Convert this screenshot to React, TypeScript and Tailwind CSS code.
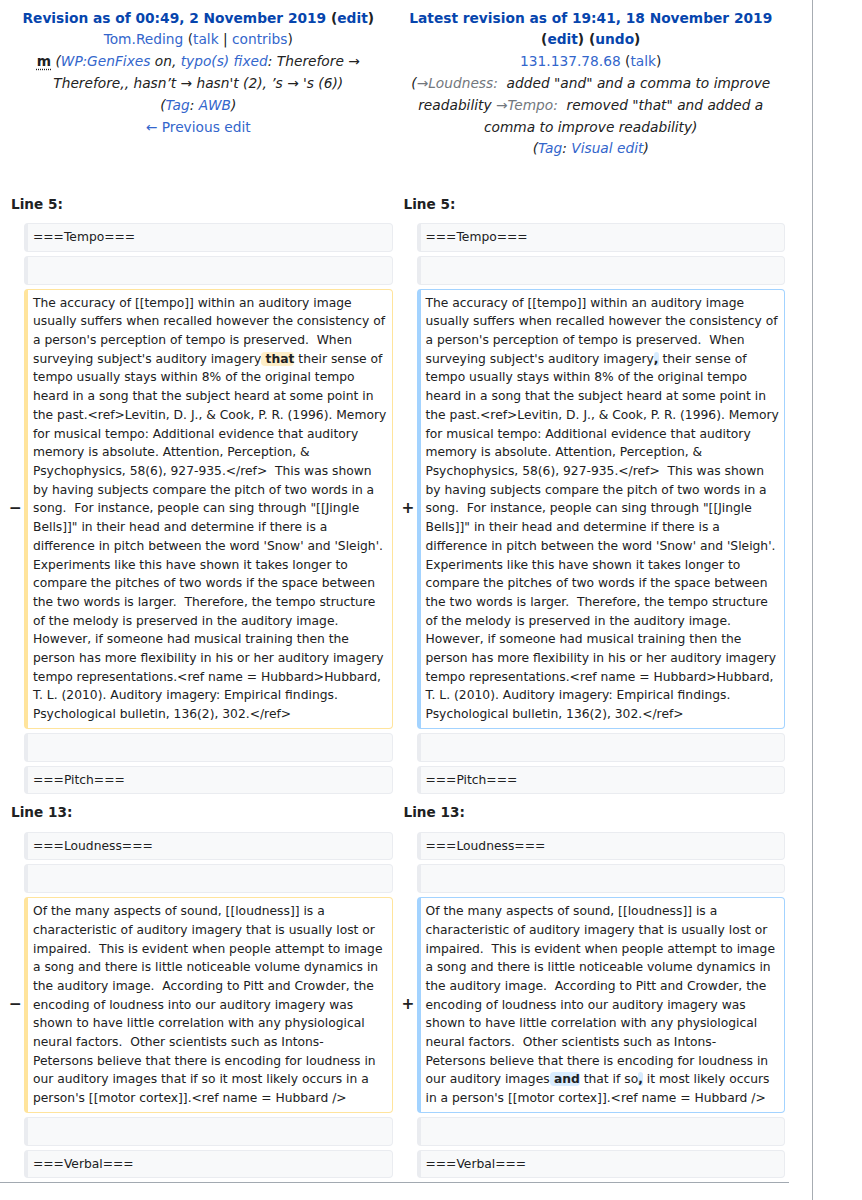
import type { ReactNode } from "react";

const tempoHead =
  "The accuracy of [[tempo]] within an auditory image usually suffers when recalled however the consistency of a person's perception of tempo is preserved.  When surveying subject's auditory imagery";
const tempoTail =
  " their sense of tempo usually stays within 8% of the original tempo heard in a song that the subject heard at some point in the past.<ref>Levitin, D. J., & Cook, P. R. (1996). Memory for musical tempo: Additional evidence that auditory memory is absolute. Attention, Perception, & Psychophysics, 58(6), 927-935.</ref>  This was shown by having subjects compare the pitch of two words in a song.  For instance, people can sing through \"[[Jingle Bells]]\" in their head and determine if there is a difference in pitch between the word 'Snow' and 'Sleigh'. Experiments like this have shown it takes longer to compare the pitches of two words if the space between the two words is larger.  Therefore, the tempo structure of the melody is preserved in the auditory image. However, if someone had musical training then the person has more flexibility in his or her auditory imagery tempo representations.<ref name = Hubbard>Hubbard, T. L. (2010). Auditory imagery: Empirical findings. Psychological bulletin, 136(2), 302.</ref>";

// the reference wraps right after "Intons-", so the break is kept explicit
const loudHead =
  "Of the many aspects of sound, [[loudness]] is a characteristic of auditory imagery that is usually lost or impaired.  This is evident when people attempt to image a song and there is little noticeable volume dynamics in the auditory image.  According to Pitt and Crowder, the encoding of loudness into our auditory imagery was shown to have little correlation with any physiological neural factors.  Other scientists such as Intons-\nPetersons believe that there is encoding for loudness in our auditory images";
const loudTail = " it most likely occurs in a person's [[motor cortex]].<ref name = Hubbard />";

const box =
  "rounded-[4px] border border-l-4 px-[5px] py-[4px] text-[12.3px] leading-[18.7px] whitespace-pre-wrap break-words text-[#202122]";

function Link({ children, dark = false }: { children: ReactNode; dark?: boolean }) {
  return <a className={dark ? "text-[#0645ad]" : "text-[#3366cc]"}>{children}</a>;
}

function Del({ children }: { children: ReactNode }) {
  return <del className="rounded-[4px] bg-[#feeec8] font-bold no-underline">{children}</del>;
}

function Ins({ children }: { children: ReactNode }) {
  return <ins className="rounded-[4px] bg-[#d8ecff] font-bold no-underline">{children}</ins>;
}

function Marker({ sign }: { sign?: string }) {
  return (
    <div className="flex items-center justify-end text-[15.4px] font-bold text-[#202122]">
      {sign ? <span className="mr-[-2px]">{sign}</span> : null}
    </div>
  );
}

function ContextRow({ text }: { text: string }) {
  const cell = `${box} border-[#eaecf0] bg-[#f8f9fa]`;
  return (
    <>
      <Marker />
      <div className={cell}>{text || <br />}</div>
      <Marker />
      <div className={cell}>{text || <br />}</div>
    </>
  );
}

function ChangeRow({ left, right }: { left: ReactNode; right: ReactNode }) {
  return (
    <>
      <Marker sign="−" />
      <div className={`${box} border-[#ffe49c] bg-white`}>{left}</div>
      <Marker sign="+" />
      <div className={`${box} border-[#a3d3ff] bg-white`}>{right}</div>
    </>
  );
}

function LineNo({ n }: { n: number }) {
  const cell = "col-span-2 flex h-[29.5px] items-center pl-[7px] text-[13.6px] font-bold text-[#202122]";
  return (
    <>
      <div className={cell}>Line {n}:</div>
      <div className={cell}>Line {n}:</div>
    </>
  );
}

function OldTitle() {
  return (
    <div className="col-span-2 px-[6px] pb-[25.6px] pt-[3.6px] text-center">
      <div className="font-bold">
        <Link dark>Revision as of 00:49, 2 November 2019</Link> (<Link dark>edit</Link>)
      </div>
      <div>
        <Link>Tom.Reding</Link> (<Link>talk</Link> | <Link>contribs</Link>)
      </div>
      <div>
        <abbr className="font-bold underline decoration-dotted underline-offset-[3px]">m</abbr>{" "}
        <span className="italic text-[#222]">
          (<Link>WP:GenFixes</Link> on, <Link>typo(s) fixed</Link>: Therefore → Therefore,, hasn’t → hasn't (2), ’s →
          's (6))
        </span>
      </div>
      <div className="italic text-[#222]">
        (<Link>Tag</Link>: <Link>AWB</Link>)
      </div>
      <div>
        <Link>← Previous edit</Link>
      </div>
    </div>
  );
}

function NewTitle() {
  return (
    <div className="col-span-2 px-[6px] pb-[25.6px] pt-[3.6px] text-center">
      <div className="font-bold">
        <Link dark>Latest revision as of 19:41, 18 November 2019</Link> (<Link dark>edit</Link>) (
        <Link dark>undo</Link>)
      </div>
      <div>
        <Link>131.137.78.68</Link> (<Link>talk</Link>)
      </div>
      <div className="italic text-[#222]">
        (<span className="text-[#72777d]">→Loudness:</span>
        {"\u00a0 "}added "and" and a comma to improve readability{" "}
        <span className="text-[#72777d]">→Tempo:</span>
        {"\u00a0 "}removed "that" and added a comma to improve readability)
      </div>
      <div className="italic text-[#222]">
        (<Link>Tag</Link>: <Link>Visual edit</Link>)
      </div>
    </div>
  );
}

export default function App() {
  return (
    <div className="min-h-[1200px] w-[813px] border-r border-[#a7acb2] bg-white font-['DejaVu_Sans',sans-serif] text-[13.75px] leading-[21.8px] text-[#202122]">
      <div className="grid w-[789px] grid-cols-[16px_minmax(0,1fr)_16px_minmax(0,1fr)] gap-[4px] border-b border-[#a2a9b1] p-[4px]">
        <OldTitle />
        <NewTitle />

        <LineNo n={5} />
        <ContextRow text="===Tempo===" />
        <ContextRow text="" />
        <ChangeRow
          left={
            <>
              {tempoHead}
              <Del> that</Del>
              {tempoTail}
            </>
          }
          right={
            <>
              {tempoHead}
              <Ins>,</Ins>
              {tempoTail}
            </>
          }
        />
        <ContextRow text="" />
        <ContextRow text="===Pitch===" />

        <LineNo n={13} />
        <ContextRow text="===Loudness===" />
        <ContextRow text="" />
        <ChangeRow
          left={
            <>
              {loudHead} that if so{loudTail}
            </>
          }
          right={
            <>
              {loudHead}
              <Ins> and</Ins> that if so<Ins>,</Ins>
              {loudTail}
            </>
          }
        />
        <ContextRow text="" />
        <ContextRow text="===Verbal===" />
      </div>
    </div>
  );
}
